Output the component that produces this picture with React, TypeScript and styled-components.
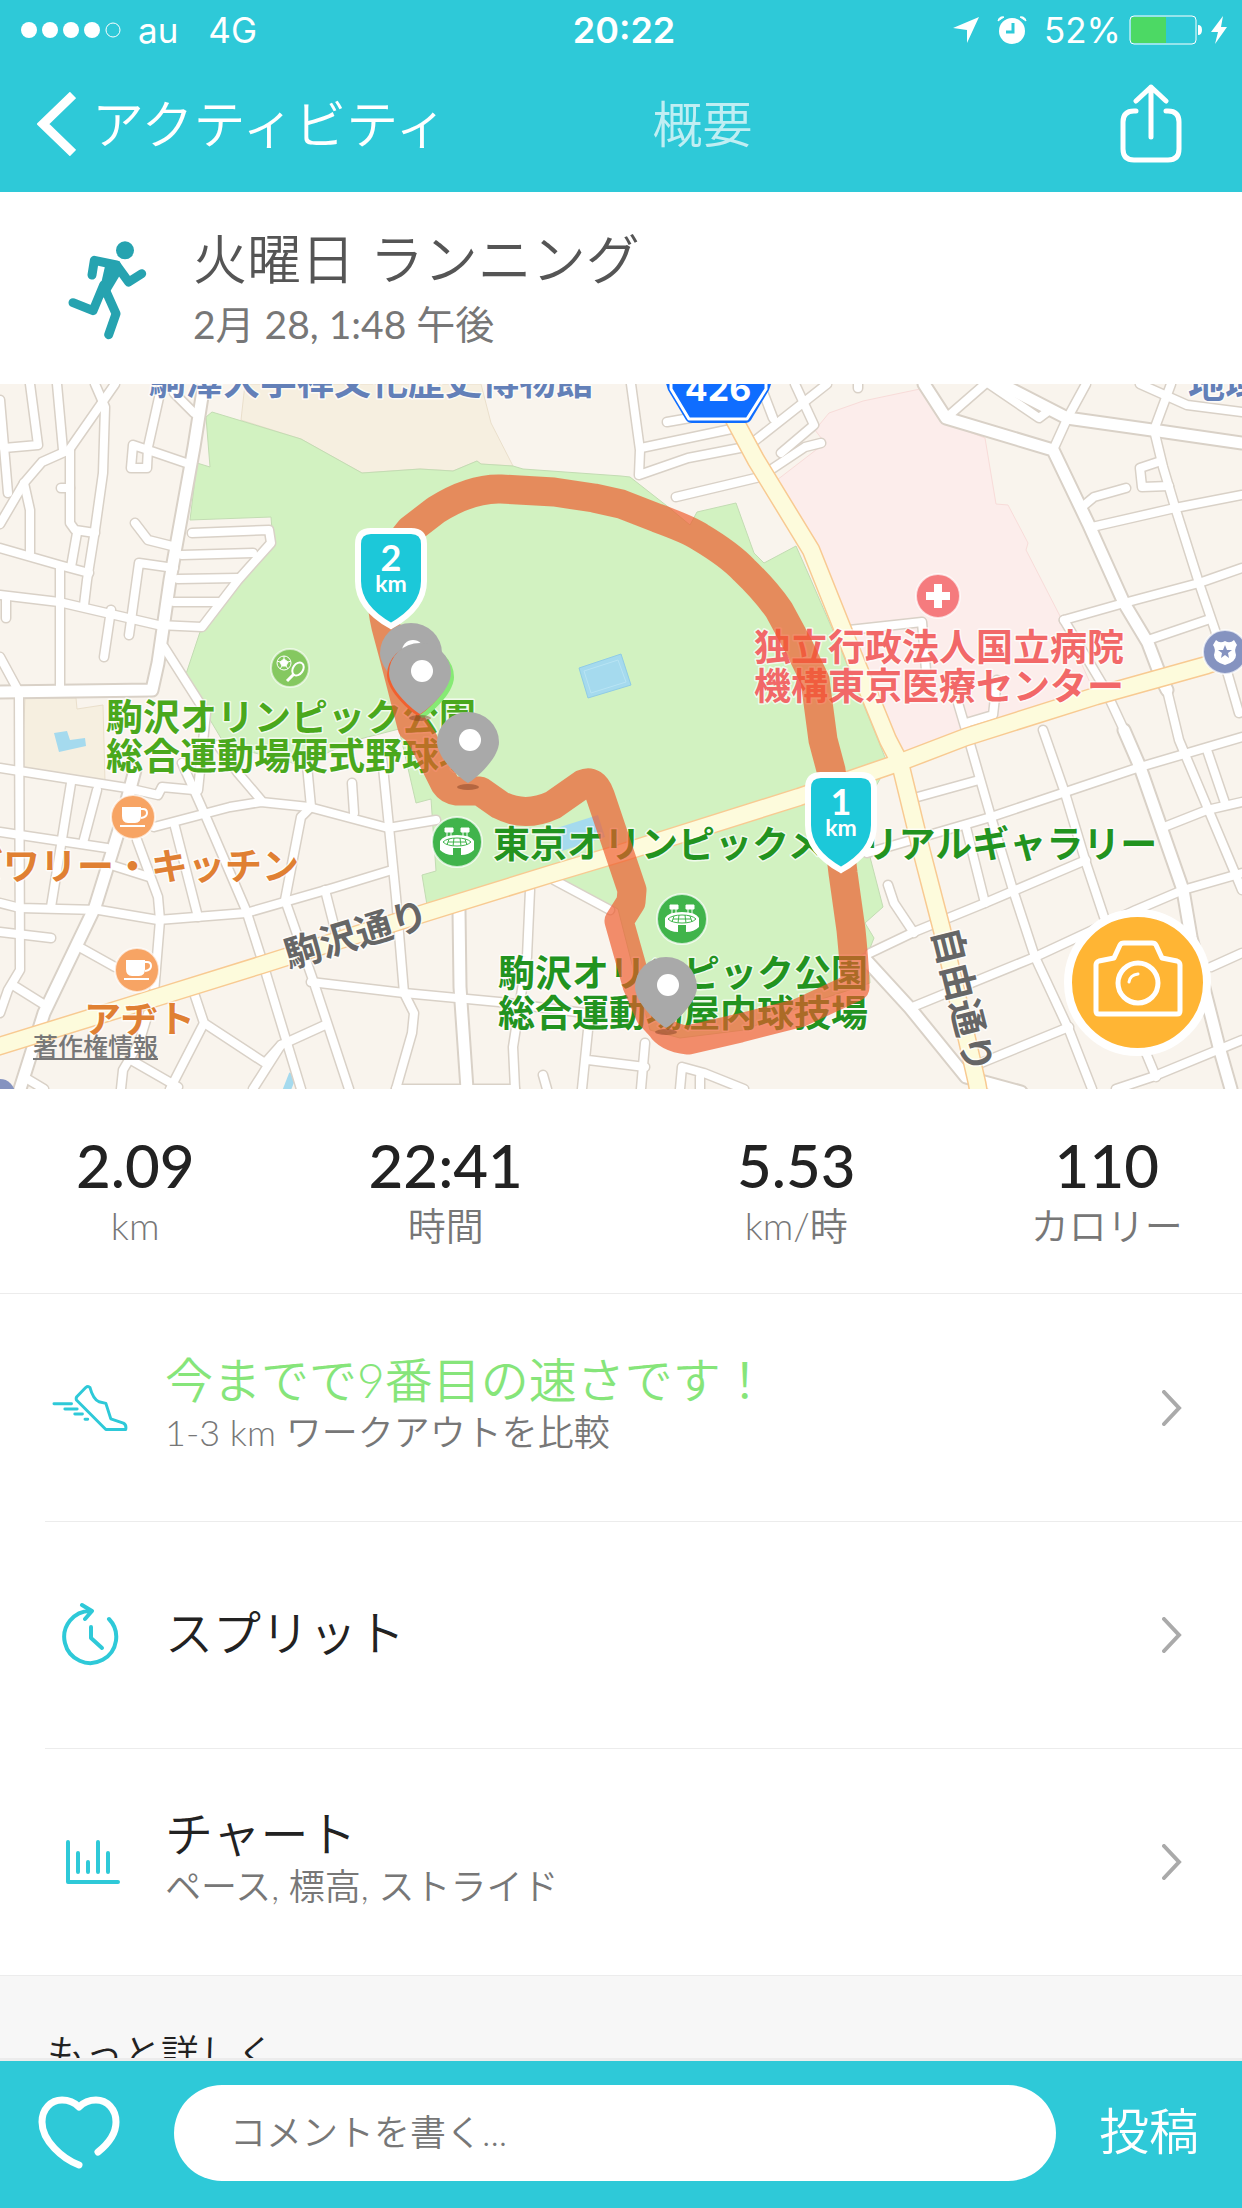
import React from "react";
import styled, { createGlobalStyle } from "styled-components";

const color = {
  teal: "#2ec9d8",
  runner: "#26a3b0",
  ink: "#222222",
  title: "#555555",
  muted: "#777777",
  line: "#ececec",
  green: "#86e57a",
  orange: "#ffb534",
};

const GlobalStyle = createGlobalStyle`
  *, *::before, *::after { box-sizing: border-box; }
  body {
    margin: 0;
    background: #ffffff;
    font-family: Lato, "Noto Sans CJK JP", sans-serif;
    font-weight: 350;
    color: ${color.ink};
  }
  button, input { font: inherit; color: inherit; }
  button { border: 0; padding: 0; background: none; cursor: pointer; }
  svg { display: block; }
`;

const Screen = styled.div`
  display: flex;
  flex-direction: column;
  height: 100vh;
  overflow: hidden;
`;

/* ---------- header ---------- */

const Header = styled.header`
  flex: none;
  background: ${color.teal};
  color: #ffffff;
`;

const StatusBar = styled.div`
  display: grid;
  grid-template-columns: 1fr auto 1fr;
  align-items: center;
  height: 60px;
  padding: 0 14px 0 20px;
  font-family: Inter, sans-serif;
  font-size: 35px;
  font-weight: 400;
`;

const StatusGroup = styled.div<{ $gap: number; $end?: boolean }>`
  display: flex;
  align-items: center;
  gap: ${(p) => p.$gap}px;
  justify-content: ${(p) => (p.$end ? "flex-end" : "flex-start")};
`;

const Clock = styled.time`
  font-size: 36px;
  font-weight: 600;
`;

const NavBar = styled.nav`
  display: grid;
  grid-template-columns: 4fr auto 3fr;
  align-items: center;
  height: 132px;
  padding-bottom: 4px;
  font-size: 52px;
  line-height: 72px;
`;

const BackButton = styled.button`
  display: flex;
  align-items: center;
  gap: 16px;
  justify-self: start;
  padding-left: 37px;
`;

const NavTitle = styled.h1`
  margin: 0;
  font-size: 50px;
  font-weight: 350;
  opacity: 0.7;
`;

const ShareButton = styled.button`
  justify-self: end;
  padding-right: 60px;
`;

/* ---------- content ---------- */

const Content = styled.main`
  flex: 1;
  min-height: 0;
  display: flex;
  flex-direction: column;
  overflow: hidden;
`;

const Summary = styled.section`
  flex: none;
  display: flex;
  align-items: center;
  gap: 46px;
  height: 192px;
  padding: 4px 67px 0;
`;

const SummaryText = styled.div`
  padding-bottom: 5px;
`;

const SummaryTitle = styled.h2`
  margin: 0;
  font-size: 54px;
  line-height: 72px;
  font-weight: 350;
  color: ${color.title};
`;

const SummaryDate = styled.p`
  margin: 0;
  font-size: 39px;
  line-height: 56px;
  font-weight: 400;
  color: ${color.muted};
`;

const MapPanel = styled.section`
  flex: none;
  position: relative;
  height: 705px;
  overflow: hidden;
  background: #f9f4ed;
`;

const MapSvg = styled.svg`
  width: 100%;
  height: 100%;
`;

const LegalLink = styled.a`
  position: absolute;
  left: 33px;
  bottom: 25px;
  font-size: 25px;
  line-height: 36px;
  font-weight: 500;
  color: #777777;
  text-decoration: underline;
`;

const CameraButton = styled.button`
  position: absolute;
  right: 31px;
  bottom: 33px;
  display: grid;
  place-items: center;
  width: 147px;
  height: 147px;
  border: 8px solid #ffffff;
  border-radius: 50%;
  background: ${color.orange};
`;

const Stats = styled.dl`
  flex: none;
  display: grid;
  grid-template-columns: 27fr 35fr 35fr 27fr;
  align-items: center;
  height: 205px;
  margin: 0;
  border-bottom: 1px solid ${color.line};
  text-align: center;
`;

const Stat = styled.div`
  display: flex;
  flex-direction: column-reverse;
  padding-top: 4px;
`;

const StatValue = styled.dd`
  margin: 0;
  font-size: 60px;
  line-height: 64px;
  font-weight: 500;
`;

const StatLabel = styled.dt`
  font-size: 38px;
  line-height: 56px;
  color: ${color.muted};
`;

const RowList = styled.ul`
  flex: none;
  margin: 0;
  padding: 0 0 0 45px;
  list-style: none;
`;

const RowItem = styled.li`
  display: flex;
  height: 227px;
  & + & {
    border-top: 1px solid ${color.line};
  }
`;

const RowButton = styled.button`
  display: grid;
  grid-template-columns: 90px 1fr 20px;
  column-gap: 30px;
  align-items: center;
  width: 100%;
  padding-right: 60px;
  text-align: left;
`;

const IconSlot = styled.span`
  display: grid;
  place-items: center;
`;

const RowText = styled.span`
  display: flex;
  flex-direction: column;
  padding-bottom: 4px;
`;

const RowTitle = styled.span<{ $accent?: boolean }>`
  font-size: 48px;
  line-height: 52px;
  color: ${(p) => (p.$accent ? color.green : color.ink)};
`;

const RowNote = styled.span`
  font-size: 36px;
  line-height: 52px;
  color: ${color.muted};
`;

const MoreSection = styled.section`
  flex: 1;
  min-height: 0;
  overflow: hidden;
  padding: 48px 47px 0;
  border-top: 1px solid ${color.line};
  border-bottom: 3px solid ${color.line};
  background: #f7f7f7;
`;

const MoreTitle = styled.h3`
  margin: 0;
  font-size: 38px;
  line-height: 56px;
  font-weight: 350;
`;

/* ---------- comment bar ---------- */

const CommentBar = styled.form`
  flex: none;
  display: flex;
  align-items: center;
  height: 147px;
  padding: 0 43px 4px 38px;
  background: ${color.teal};
  color: #ffffff;
`;

const CommentInput = styled.input`
  flex: 1;
  min-width: 0;
  height: 96px;
  margin: 0 43px 0 54px;
  padding: 0 56px 2px;
  border: 0;
  border-radius: 48px;
  background: #ffffff;
  font-size: 36px;
  color: ${color.ink};
  &::placeholder {
    color: ${color.muted};
    opacity: 1;
  }
`;

const PostButton = styled.button`
  padding-bottom: 4px;
  font-size: 50px;
  line-height: 72px;
`;

/* ---------- map data ---------- */

const streets: string[] = [
  "M95 384L105 407L103 473L95 530L87 580L84 605",
  "M115 384L69 450L42 462L24 483L0 524",
  "M57 384L63 450",
  "M30 384L38 445L4 448",
  "M0 400L8 493",
  "M24 483L30 510L30 553",
  "M70 450L70 523L75 530L95 533",
  "M61 488L70 488",
  "M77 533L71 567",
  "M0 548L59 565L89 573",
  "M0 595L59 602L158 625L202 627L238 580L271 543L269 530L192 533",
  "M182 555L253 553",
  "M178 579L238 578",
  "M174 602L218 602",
  "M162 384L148 447L147 468L131 468L133 445L148 450L192 465",
  "M174 393L194 413",
  "M135 523L148 540L176 547",
  "M174 568L139 563L129 635",
  "M111 610L104 657",
  "M60 568L60 690",
  "M6 600L6 618",
  "M0 657L19 692L20 970L8 990L0 1013",
  "M164 647L206 713L198 790",
  "M182 763L206 817L246 910L261 957L277 1010L301 1089",
  "M0 768L127 788L158 795L162 787L194 790",
  "M0 832L107 848",
  "M71 783L51 907",
  "M97 790L83 843",
  "M0 903L20 908L99 910L158 920L246 913L333 888L392 870",
  "M0 932L51 938",
  "M154 827L230 807L261 802L309 807L388 828L436 820",
  "M174 823L198 917",
  "M137 840L158 897L160 920L154 993",
  "M111 865L149 877",
  "M218 745L238 773L261 800",
  "M307 765L311 807L301 817L285 900L313 980L349 1089",
  "M352 783L354 813",
  "M382 757L396 897L404 993L414 1013L412 1033L396 1089",
  "M325 890L337 937",
  "M311 982L404 993L499 1002L600 1015",
  "M530 890L527 957L513 1047L515 1089",
  "M554 880L610 910",
  "M194 993L204 1023L265 1063L281 1045L325 1025",
  "M204 1023L170 1089",
  "M81 948L115 967",
  "M16 987L48 1007",
  "M150 1007L139 1043L123 1070L121 1089",
  "M131 1060L178 1087",
  "M24 1077L44 1089",
  "M281 1045L253 1089",
  "M396 1089L515 1089",
  "M588 1030L582 1089M588 1060L645 1067",
  "M543 1075L547 1089",
  "M631 384L640 450L639 475L688 458L740 448",
  "M641 448L736 428",
  "M667 422L690 418",
  "M676 497L760 477L805 447L821 443",
  "M827 384L752 443",
  "M795 384L801 397L814 425L781 453",
  "M760 384L773 418",
  "M858 380L858 388",
  "M946 418L985 384",
  "M989 384L1039 418L1047 412",
  "M1086 384L1068 417L1053 450",
  "M1171 384L1154 430L1163 467L1175 507L1199 583L1215 630L1239 713",
  "M1140 384L1187 405L1242 412",
  "M1158 462L1140 468L1142 487L1169 486",
  "M1082 507L1094 497L1126 488",
  "M1092 527L1175 508L1242 495",
  "M1064 620L1124 603L1199 583L1242 568",
  "M1064 620L1104 687L1124 730",
  "M1148 640L1207 620",
  "M849 630L922 622L926 670",
  "M958 703L966 730M966 723L993 715L997 680",
  "M966 730L991 817L1013 890L1035 957L1069 1030L1092 1089",
  "M1043 730L1065 793L1086 863L1104 917",
  "M1167 690L1179 740L1235 873L1242 890",
  "M914 798L979 780",
  "M867 853L991 817L1140 767L1242 737",
  "M870 953L914 932L985 903L1086 860",
  "M888 885L894 903L914 933",
  "M966 827L985 903",
  "M910 1008L1035 957L1136 910L1183 890L1242 873",
  "M981 1063L1069 1027",
  "M1164 827L1207 810L1242 802",
  "M1207 750L1225 803",
  "M1242 1040L1152 1077L1116 1089",
  "M1211 967L1242 953",
  "M1146 1053L1156 1077",
  "M645 1043L641 1089",
  "M680 1089L682 1067L704 1073L744 1089M700 1077L700 1089",
];

const avenues: string[] = [
  "M204 384L194 447L170 580L158 663L152 690L0 692",
  "M135 770L119 830L95 907L44 1013L20 1089",
  "M459 910L460 987L467 1089",
  "M924 384L946 418L1053 450L1088 523L1124 603L1148 643L1162 680L1167 690",
  "M1001 384L1067 418L1152 430L1242 443",
  "M1124 730L1140 767L1183 890L1191 937L1219 1047L1231 1089",
  "M866 960L910 1008L966 1077L1021 1092",
];

const highways: string[] = [
  "M-10 1049L158 997L261 965L428 912L554 873L621 853L799 797L898 763L966 737L1096 696L1207 665L1250 650",
  "M728 408L756 460L811 550L843 630L888 740L900 763L922 853L942 930L977 1083L980 1100",
];

const route =
  "M412 727L394 657L386 627Q374 575 394 550L410 530L436 510Q471 488 501 489L554 492L594 498L621 504L657 518Q690 530 700 537Q730 555 744 570Q765 590 779 610L799 647L815 680L823 740L831 770L843 873L851 930Q855 970 855 987L799 1013L740 1028L688 1040Q668 1038 661 1027L650 1015L637 985L619 921L631 902L632 890L600 795Q594 779 583 784L553 805Q525 818 500 805L480 791L457 791Q449 790 445 784L423 740L414 727";

type LabelProps = {
  x: number;
  y: number;
  fill: string;
  children: React.ReactNode;
  anchor?: "start" | "middle" | "end";
  rotate?: number;
};

const MapText = styled.text`
  font-family: "Noto Sans CJK JP", sans-serif;
  font-size: 37px;
  font-weight: 700;
  paint-order: stroke;
  stroke: #ffffff;
  stroke-opacity: 0.7;
  stroke-width: 3px;
  stroke-linejoin: round;
`;

const MarkerText = styled.text<{ $size: number }>`
  font-family: Lato, sans-serif;
  font-size: ${(p) => p.$size}px;
  font-weight: 700;
  fill: #ffffff;
  text-anchor: middle;
`;

const ShieldText = styled.text`
  font-family: Inter, sans-serif;
  font-size: 34px;
  font-weight: 700;
  fill: #ffffff;
  text-anchor: middle;
`;

function Label({ x, y, fill, children, anchor = "start", rotate = 0 }: LabelProps) {
  return (
    <MapText x={x} y={y} fill={fill} textAnchor={anchor} transform={rotate ? `rotate(${rotate} ${x} ${y})` : undefined}>
      {children}
    </MapText>
  );
}

const pinShape = "M0 0C-6 -3 -31 -24 -31 -41A31 30 0 0 1 31 -41C31 -24 6 -3 0 0Z";

function Pin({ x, y }: { x: number; y: number }) {
  return (
    <g transform={`translate(${x} ${y})`}>
      <ellipse cx="0" cy="4" rx="11" ry="3" fill="#7a3a1e" opacity="0.45" />
      <path d={pinShape} fill="#a9a9a9" />
      <circle cx="2" cy="-43" r="11" fill="#ffffff" />
    </g>
  );
}

function KmMarker({ x, y, value }: { x: number; y: number; value: string }) {
  return (
    <g transform={`translate(${x} ${y})`}>
      <path
        d="M-33 -86Q-33 -99 -20 -99H20Q33 -99 33 -86V-49C33 -28 18 -14 0 -4C-18 -14 -33 -28 -33 -49Z"
        fill="#1cc8d9"
        stroke="#ffffff"
        strokeWidth="6"
      />
      <MarkerText $size={36} y={-59}>{value}</MarkerText>
      <MarkerText $size={23} y={-38}>km</MarkerText>
    </g>
  );
}

function Cafe({ x, y }: { x: number; y: number }) {
  return (
    <g transform={`translate(${x} ${y})`}>
      <circle r="22" fill="#f7a464" stroke="#ffffff" strokeOpacity="0.7" strokeWidth="2" />
      <path d="M-11 -10H8V-1Q8 6 2 6H-5Q-11 6 -11 -1Z" fill="#ffffff" />
      <path d="M8 -8h2q4 0 4 4t-6 5M-13 9H12" fill="none" stroke="#ffffff" strokeWidth="2" />
    </g>
  );
}

function Stadium({ x, y }: { x: number; y: number }) {
  return (
    <g transform={`translate(${x} ${y})`}>
      <circle r="25" fill="#40b44b" stroke="#ffffff" strokeOpacity="0.7" strokeWidth="2" />
      <path d="M-12 -14H-4V-10H-12ZM4 -14H12V-10H4Z" fill="#ffffff" stroke="#ffffff" />
      <path d="M-10 -10V-5M-6 -10V-5M6 -10V-5M10 -10V-5" stroke="#ffffff" />
      <path d="M-17 -1Q-14 -7 0 -7T17 -1V8Q12 13 4 13V6H-4V13Q-12 13 -17 8Z" fill="#ffffff" />
      <path d="M-14 0Q-10 -4 0 -4T14 0Q10 4 0 4T-14 0ZM-8 -3L-10 3M8 -3L10 3M-9 0H9M-3 -4L-4 4M3 -4L4 4" fill="none" stroke="#40b44b" />
    </g>
  );
}

function MapArt() {
  return (
    <MapSvg viewBox="0 384 1242 705" preserveAspectRatio="xMidYMid slice" role="img" aria-label="ルートマップ">
      <rect x="-1000" y="0" width="4000" height="2000" fill="#f9f4ed" />
      <g stroke="#eadfcb" strokeWidth="1" fill="#f6efe0">
        <path d="M245 384L241 420L301 439L362 473L420 469L453 471L477 461L481 464L513 466L491 423L481 384Z" />
        <path d="M25 698H76L77 709L103 705L105 782L22 767Z" />
      </g>
      <path
        d="M920 389L863 401L829 413L815 430L825 443L777 480L811 550L843 630L888 740L900 762L1096 696L1061 618L1026 550L1028 543L1008 505L996 504L985 438L946 423Z"
        fill="#fcedeb"
        stroke="#f8dcd9"
      />
      <path
        d="M212 412L301 439L362 473L420 469L453 471L477 461L481 464L513 466L523 469L621 476L630 477L667 506L690 525L697 512L736 503L754 553L764 563L796 546L811 580L837 640L878 740L888 765L868 800L870 857L883 907L865 923L874 938L868 953L870 983L819 1000L744 1030L680 1038L650 1030L633 968L618 909L562 880L427 905L422 875L436 871L431 799L416 803L407 764L399 729L356 740L300 765L225 745L206 713L185 677L200 632L273 543L271 517L190 520L197 463L210 467L206 417Z"
        fill="#d2f2c1"
        stroke="#c3dcb3"
      />
      <path d="M54 733L67 731L70 740L85 738L86 746L59 752Z" fill="#a5daee" />
      <path d="M579 668L621 654L631 685L588 698Z" fill="#a5daee" stroke="#90cce6" />
      <path d="M584 671L618 660L626 682L591 693Z" fill="none" stroke="#b8e4f4" />
      <path d="M557 828L598 815L605 837L562 851Z" fill="#a5daee" />
      <path d="M293 1074L286 1092" stroke="#a5daee" strokeWidth="8" />

      <g fill="none" strokeLinecap="round" strokeLinejoin="round">
        <g stroke="#d9d1c7" strokeWidth="11">
          {streets.map((d) => <path key={d} d={d} />)}
        </g>
        <g stroke="#d9d1c7" strokeWidth="15">
          {avenues.map((d) => <path key={d} d={d} />)}
        </g>
        <g stroke="#ffffff" strokeWidth="8">
          {streets.map((d) => <path key={d} d={d} />)}
        </g>
        <g stroke="#ffffff" strokeWidth="11">
          {avenues.map((d) => <path key={d} d={d} />)}
        </g>
        <g stroke="#f8ca92" strokeWidth="19">
          {highways.map((d) => <path key={d} d={d} />)}
        </g>
        <g stroke="#fdfbdc" strokeWidth="16">
          {highways.map((d) => <path key={d} d={d} />)}
        </g>
      </g>

      <g strokeLinejoin="round">
        <path d="M662 370H776L769 390L751 420Q749 423 745 423H692Q688 423 686 420L668 390Z" fill="#0f6dff" />
        <path d="M671 370L671 389L689 419H747L766 389V370" fill="none" stroke="#ffffff" strokeWidth="3" />
        <ShieldText x={718} y={401}>426</ShieldText>
      </g>

      <g transform="translate(290 668)">
        <circle r="19" fill="#85c860" stroke="#ffffff" strokeOpacity="0.6" strokeWidth="2" />
        <circle cx="-6" cy="-5" r="7" fill="none" stroke="#ffffff" strokeWidth="1" />
        <path d="M-6 -9L-2 -6L-4 -2H-8L-10 -6ZM-6 -12V-9M-2 -6L1 -7M-4 -2L-2 1M-8 -2L-10 1M-10 -6L-13 -7" fill="#ffffff" stroke="#ffffff" />
        <ellipse cx="8" cy="1" rx="5" ry="7" transform="rotate(35 8 1)" fill="none" stroke="#ffffff" strokeWidth="2" />
        <path d="M4 6L-3 13" stroke="#ffffff" strokeWidth="3" />
      </g>
      <Cafe x={133} y={817} />
      <Cafe x={137} y={970} />
      <Stadium x={457} y={842} />
      <Stadium x={682} y={919} />
      <g transform="translate(938 596)">
        <circle r="22" fill="#f57b7e" stroke="#ffffff" strokeOpacity="0.7" strokeWidth="2" />
        <path d="M0 -12V12M-12 0H12" stroke="#ffffff" strokeWidth="8" />
      </g>
      <g transform="translate(1225 652)">
        <circle r="22" fill="#8593c0" stroke="#ffffff" strokeOpacity="0.7" strokeWidth="2" />
        <path d="M-9 -12Q-5 -8 0 -11Q5 -8 9 -12L12 -7Q9 -3 11 3Q11 10 0 13Q-11 10 -11 3Q-9 -3 -12 -7Z" fill="#ffffff" />
        <path d="M0 -7L2 -2H7L3 1L4 6L0 3L-4 6L-3 1L-7 -2H-2Z" fill="#8593c0" />
      </g>
      <circle cx="0" cy="1094" r="15" fill="#8593c0" />

      <Label x={149} y={395} fill="#6380b8">駒澤大学禅文化歴史博物館</Label>
      <Label x={1188} y={398} fill="#6380b8">地域</Label>
      <Label x={106} y={731} fill="#4aa81c">駒沢オリンピック公園</Label>
      <Label x={106} y={770} fill="#4aa81c">総合運動場硬式野球場</Label>
      <Label x={493} y={858} fill="#22931f">東京オリンピックメモリアルギャラリー</Label>
      <Label x={498} y={987} fill="#22931f">駒沢オリンピック公園</Label>
      <Label x={498} y={1027} fill="#22931f">総合運動場屋内球技場</Label>
      <Label x={754} y={661} fill="#f26868">独立行政法人国立病院</Label>
      <Label x={754} y={700} fill="#f26868">機構東京医療センター</Label>
      <Label x={299} y={880} fill="#e08033" anchor="end">ズワリー・キッチン</Label>
      <Label x={84} y={1033} fill="#e08033">アヂト</Label>
      <Label x={360} y={947} fill="#666666" anchor="middle" rotate={-17}>駒沢通り</Label>
      <Label x={950} y={1003} fill="#666666" anchor="middle" rotate={76}>自由通り</Label>

      <path d={route} fill="none" stroke="#ee582a" strokeOpacity="0.67" strokeWidth="29" strokeLinecap="round" strokeLinejoin="round" />

      <Pin x={411} y={694} />
      <path d={pinShape} transform="translate(423 718)" fill="#86ea74" />
      <path d={pinShape} transform="translate(418 716)" fill="#f1602f" />
      <Pin x={420} y={714} />
      <Pin x={468} y={783} />
      <Pin x={666} y={1028} />
      <KmMarker x={391} y={630} value="2" />
      <KmMarker x={841} y={874} value="1" />
    </MapSvg>
  );
}

/* ---------- icons ---------- */

const SignalDots = () => (
  <svg width="102" height="18" viewBox="0 0 102 18" aria-hidden="true" fill="#ffffff">
    {[9, 30, 51, 72].map((cx) => <circle key={cx} cx={cx} cy="9" r="8" />)}
    <circle cx="93" cy="9" r="7" fill="none" stroke="#ffffff" strokeWidth="1" />
  </svg>
);

const LocationArrow = () => (
  <svg width="28" height="28" viewBox="0 0 28 28" aria-hidden="true">
    <path d="M27 1L15 27V14L1 12Z" fill="#ffffff" />
  </svg>
);

const AlarmIcon = () => (
  <svg width="30" height="30" viewBox="0 0 30 30" aria-hidden="true">
    <circle cx="15" cy="16" r="13" fill="#ffffff" />
    <path d="M1 6Q2 1 7 2ZM29 6Q28 1 23 2Z" fill="#ffffff" stroke="#ffffff" />
    <path d="M16 8V17H9" fill="none" stroke={color.teal} strokeWidth="3" />
  </svg>
);

const BatteryIcon = () => (
  <svg width="74" height="30" viewBox="0 0 74 30" aria-hidden="true">
    <rect x="1" y="1" width="66" height="28" rx="4" fill="none" stroke="#ffffff" strokeWidth="1" />
    <path d="M2 5Q2 2 5 2H37V28H5Q2 28 2 25Z" fill="#4cd964" />
    <path d="M69 10Q73 10 73 15T69 20Z" fill="#ffffff" />
  </svg>
);

const BoltIcon = () => (
  <svg width="17" height="30" viewBox="0 0 17 30" aria-hidden="true">
    <path d="M12 1L0 17H7L4 29L16 12H10Z" fill="#ffffff" />
  </svg>
);

const BackIcon = () => (
  <svg width="39" height="64" viewBox="0 0 39 64" aria-hidden="true">
    <path d="M36 3L6 32L36 61" fill="none" stroke="#ffffff" strokeWidth="9" />
  </svg>
);

const ShareIcon = () => (
  <svg width="62" height="80" viewBox="0 0 62 80" aria-hidden="true" fill="none" stroke="#ffffff" strokeWidth="5" strokeLinecap="round" strokeLinejoin="round">
    <path d="M16 27H14Q3 27 3 38V65Q3 76 14 76H48Q59 76 59 65V38Q59 27 48 27H46M31 53V3M16 17L31 3L46 17" />
  </svg>
);

const RunnerIcon = () => (
  <svg width="80" height="100" viewBox="80 60 240 300" aria-hidden="true">
    <circle cx="254" cy="91" r="27" fill={color.runner} />
    <g fill="none" stroke={color.runner} strokeWidth="27" strokeLinecap="round" strokeLinejoin="round">
      <path d="M155 165L162 121L228 135L265 186L304 161" />
      <path d="M98 248L158 272L190 195" />
      <path d="M193 205L227 281L205 344" />
    </g>
    <path d="M196 130L238 124L248 150L205 222L170 245Z" fill={color.runner} />
  </svg>
);

const ShoeIcon = () => (
  <svg width="76" height="48" viewBox="64 98 230 144" aria-hidden="true" fill="none" stroke={color.teal} strokeWidth="9" strokeLinecap="round" strokeLinejoin="round">
    <path d="M166 108Q173 102 179 108Q188 142 206 151L227 156L242 203L280 216Q290 221 287 235H227L138 146Q136 140 139 136Z" />
    <path d="M70 157H123M103 173H140M133 188H156M164 204H172" />
  </svg>
);

const SplitIcon = () => (
  <svg width="60" height="66" viewBox="-1 0 60 66" aria-hidden="true" fill="none" stroke={color.teal} strokeWidth="4" strokeLinecap="round" strokeLinejoin="round">
    <path d="M48 17A26 26 0 1 1 30 9M21 3L31 9L24 17" />
    <path d="M30 25V36L41 46" />
  </svg>
);

const ChartIcon = () => (
  <svg width="60" height="44" viewBox="-6 0 60 44" aria-hidden="true" fill="none" stroke={color.teal} strokeWidth="4" strokeLinecap="round" strokeLinejoin="round">
    <path d="M2 2V42H52M12 13V32M22 22V32M32 2V32M42 13V32" />
  </svg>
);

const ChevronIcon = () => (
  <svg width="20" height="36" viewBox="0 0 20 36" aria-hidden="true">
    <path d="M2 2L17 18L2 34" fill="none" stroke="#aaaaaa" strokeWidth="4" strokeLinecap="round" />
  </svg>
);

const CameraIcon = () => (
  <svg width="90" height="90" viewBox="0 0 90 90" aria-hidden="true" fill="none" stroke="#ffffff" strokeWidth="5" strokeLinejoin="round" strokeLinecap="round">
    <path d="M3 27Q3 24 6 23L21 20L27 7Q28 5 31 5H59Q62 5 63 7L69 20L84 23Q87 24 87 27V73Q87 76 84 76H6Q3 76 3 73Z" />
    <circle cx="45" cy="45" r="20" />
    <path d="M36 44Q37 37 45 36" strokeWidth="3" />
  </svg>
);

const HeartIcon = () => (
  <svg width="82" height="74" viewBox="0 0 82 74" aria-hidden="true" fill="none" stroke="#ffffff" strokeWidth="7" strokeLinecap="round" strokeLinejoin="round">
    <path d="M41 69C25 63 4 45 4 26C4 13 13 4 24 4Q34 4 41 11Q48 4 58 4C69 4 78 13 78 26C78 37 70 48 60 56" />
  </svg>
);

const stats = [
  { value: "2.09", label: "km" },
  { value: "22:41", label: "時間" },
  { value: "5.53", label: "km/時" },
  { value: "110", label: "カロリー" },
];

const rows = [
  { icon: <ShoeIcon />, title: "今までで9番目の速さです！", note: "1-3 km ワークアウトを比較", accent: true },
  { icon: <SplitIcon />, title: "スプリット" },
  { icon: <ChartIcon />, title: "チャート", note: "ペース, 標高, ストライド" },
];

export default function App() {
  return (
    <Screen>
      <GlobalStyle />
      <Header>
        <StatusBar>
          <StatusGroup $gap={30}>
            <StatusGroup $gap={16}>
              <SignalDots />
              <span>au</span>
            </StatusGroup>
            <span>4G</span>
          </StatusGroup>
          <Clock>20:22</Clock>
          <StatusGroup $gap={8} $end>
            <StatusGroup $gap={17}>
              <LocationArrow />
              <AlarmIcon />
              <span>52%</span>
            </StatusGroup>
            <BatteryIcon />
            <BoltIcon />
          </StatusGroup>
        </StatusBar>
        <NavBar>
          <BackButton type="button">
            <BackIcon />
            アクティビティ
          </BackButton>
          <NavTitle>概要</NavTitle>
          <ShareButton type="button" aria-label="共有">
            <ShareIcon />
          </ShareButton>
        </NavBar>
      </Header>

      <Content>
        <Summary>
          <RunnerIcon />
          <SummaryText>
            <SummaryTitle>火曜日 ランニング</SummaryTitle>
            <SummaryDate>2月 28, 1:48 午後</SummaryDate>
          </SummaryText>
        </Summary>

        <MapPanel>
          <MapArt />
          <LegalLink href="#legal">著作権情報</LegalLink>
          <CameraButton type="button" aria-label="写真を追加">
            <CameraIcon />
          </CameraButton>
        </MapPanel>

        <Stats>
          {stats.map((s) => (
            <Stat key={s.label}>
              <StatLabel>{s.label}</StatLabel>
              <StatValue>{s.value}</StatValue>
            </Stat>
          ))}
        </Stats>

        <RowList>
          {rows.map((r) => (
            <RowItem key={r.title}>
              <RowButton type="button">
                <IconSlot>{r.icon}</IconSlot>
                <RowText>
                  <RowTitle $accent={r.accent}>{r.title}</RowTitle>
                  {r.note && <RowNote>{r.note}</RowNote>}
                </RowText>
                <ChevronIcon />
              </RowButton>
            </RowItem>
          ))}
        </RowList>

        <MoreSection>
          <MoreTitle>もっと詳しく</MoreTitle>
        </MoreSection>
      </Content>

      <CommentBar onSubmit={(e) => e.preventDefault()}>
        <button type="button" aria-label="いいね">
          <HeartIcon />
        </button>
        <CommentInput type="text" aria-label="コメント" placeholder="コメントを書く..." />
        <PostButton type="submit">投稿</PostButton>
      </CommentBar>
    </Screen>
  );
}
